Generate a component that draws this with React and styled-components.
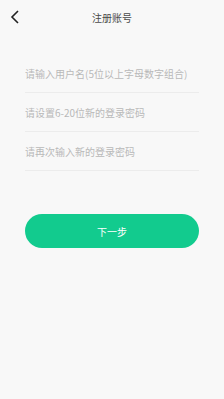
import React from "react";
import styled, { createGlobalStyle } from "styled-components";

const Global = createGlobalStyle`
  html, body {
    margin: 0;
    padding: 0;
    background: #f8f8f8;
  }
  body {
    font-family: "Noto Sans CJK SC", "Noto Sans", sans-serif;
  }
  * { box-sizing: border-box; }
`;

const Page = styled.div`
  width: 224px;
  min-height: 399px;
  background: #f8f8f8;
`;

const Header = styled.div`
  height: 34px;
  display: flex;
  align-items: center;
  justify-content: center;
  position: relative;
`;

const Back = styled.button`
  position: absolute;
  left: 6px;
  top: 8px;
  width: 18px;
  height: 18px;
  border: 0;
  padding: 0;
  background: none;
  display: flex;
  align-items: center;
  justify-content: center;
`;

const Title = styled.div`
  font-size: 10px;
  color: #4a4a4a;
`;

const Form = styled.div`
  padding: 20px 25px 0 25px;
`;

const Field = styled.input`
  display: block;
  width: 100%;
  height: 39px;
  border: 0;
  border-bottom: 1px solid #ececec;
  background: transparent;
  font-family: inherit;
  font-size: 10px;
  color: #333;
  padding: 0;
  outline: none;
  &::placeholder {
    color: #b8b8b8;
  }
`;

const Next = styled.button`
  display: block;
  margin: 43px 25px 0 25px;
  width: 174px;
  height: 34px;
  border: 0;
  border-radius: 17px;
  background: #12cb8e;
  color: #fff;
  font-family: inherit;
  font-size: 10px;
`;

export default function App() {
  return (
    <Page>
      <Global />
      <Header>
        <Back>
          <svg width="10" height="14" viewBox="0 0 10 14">
            <path d="M8 1 L2 7 L8 13" fill="none" stroke="#222" strokeWidth="1.6" />
          </svg>
        </Back>
        <Title>注册账号</Title>
      </Header>
      <Form>
        <Field placeholder="请输入用户名(5位以上字母数字组合)" />
        <Field placeholder="请设置6-20位新的登录密码" type="password" />
        <Field placeholder="请再次输入新的登录密码" type="password" />
      </Form>
      <Next>下一步</Next>
    </Page>
  );
}
